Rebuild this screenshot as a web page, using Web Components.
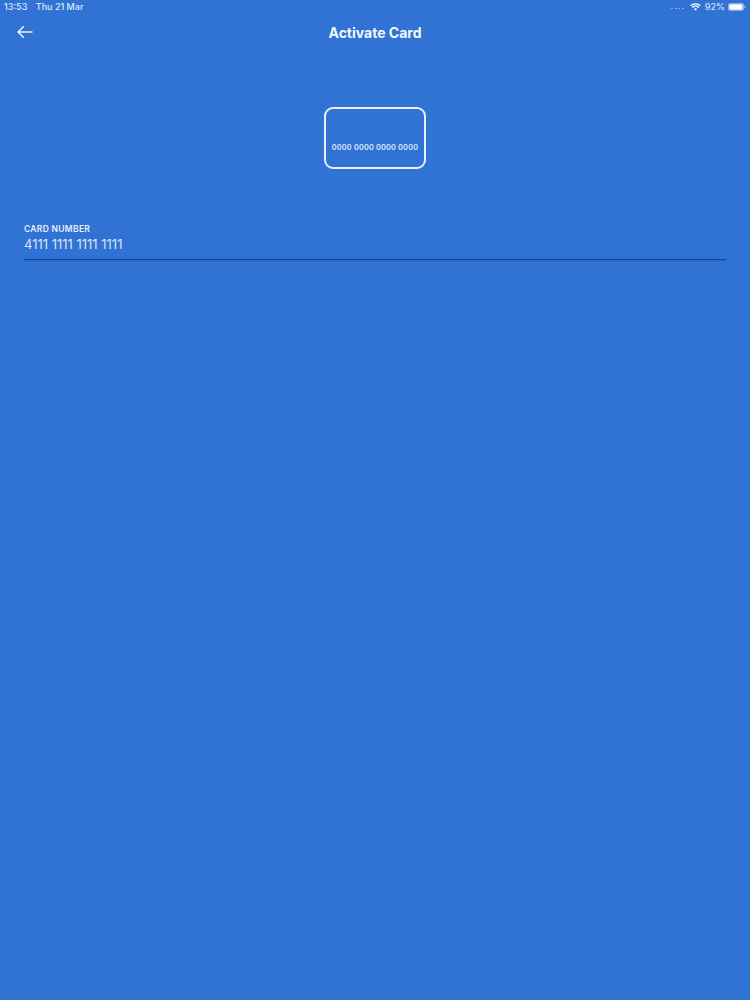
<!DOCTYPE html>
<html><head><meta charset="utf-8">
<style>
html,body{margin:0;padding:0;height:100%;background:#3073d4;}
body{font-family:Inter,"Liberation Sans",sans-serif;color:#fff;}
</style></head>
<body>
<activate-screen>
  <status-bar></status-bar>
  <nav-bar title="Activate Card"></nav-bar>
  <card-graphic number="0000 0000 0000 0000"></card-graphic>
  <text-field label="CARD NUMBER" value="4111 1111 1111 1111"></text-field>
</activate-screen>
<script>
function def(name, html, init){
  customElements.define(name, class extends HTMLElement{
    constructor(){super();this.attachShadow({mode:'open'}).innerHTML=html;}
    connectedCallback(){ if(init) init(this,this.shadowRoot); }
  });
}
def('activate-screen',`<style>:host{display:flex;flex-direction:column;width:750px;height:1000px;background:#3073d4;overflow:hidden}</style><slot></slot>`);
def('status-bar',`<style>
:host{display:flex;justify-content:space-between;align-items:center;height:13px;padding:0 4px 0 4px;font-size:9px;font-weight:500;color:#dbe8fa;line-height:13px}
.l,.r{display:flex;align-items:center}
.l span+span{margin-left:8.5px}
.dots{display:flex;gap:1.5px;margin-right:6px}
.dots i{width:2px;height:1px;background:#7fa8e4;margin-top:4px}
svg{display:block}
.pct{margin:0 3px 0 4px;color:#cfe0f7}
</style>
<div class="l"><span>13:53</span><span>Thu 21 Mar</span></div>
<div class="r"><div class="dots"><i></i><i></i><i></i><i></i></div>
<svg width="11" height="8" viewBox="0 0 11 8"><path d="M.6 2.8a7 7 0 0 1 9.8 0M2.3 4.5a4.6 4.6 0 0 1 6.4 0" fill="none" stroke="#fff" stroke-width="1.3"/><path d="M5.5 7.6 3.9 6a2.3 2.3 0 0 1 3.2 0z" fill="#fff"/></svg>
<span class="pct">92%</span>
<svg width="18" height="8" viewBox="0 0 18 8"><rect x=".4" y=".4" width="15.2" height="7.2" rx="1.8" fill="none" stroke="#c3d6f2" stroke-width=".7"/><rect x="1.2" y="1.2" width="13.4" height="5.6" rx="1" fill="#fff"/><rect x="16.3" y="2.8" width="1" height="2.4" rx=".5" fill="#a9c5ee"/></svg></div>`);
def('nav-bar',`<style>
:host{display:flex;align-items:center;justify-content:center;position:relative;height:38px;font-size:14px;font-weight:700;color:#f3f7fd}
button{position:absolute;left:17px;top:12px;padding:0;border:0;background:none;display:block;line-height:0}
span{transform:translateY(-.5px)}
</style>
<button aria-label="Back"><svg width="16" height="14" viewBox="0 0 16 14"><path d="M15.5 7H1.2M6.8 1.2 1 7l5.8 5.8" fill="none" stroke="#eef4fc" stroke-width="1.5"/></svg></button>
<span id="t"></span>`,(h,s)=>{s.getElementById('t').textContent=h.getAttribute('title')});
def('card-graphic',`<style>
:host{display:flex;justify-content:center;margin-top:56px}
.c{box-sizing:border-box;width:102px;height:62px;border:2px solid #e8f0fb;border-radius:9px;display:flex;align-items:flex-end;justify-content:center;padding-bottom:14.5px;font-size:7.3px;font-weight:600;line-height:10px;color:#dfeafa;letter-spacing:.2px;white-space:nowrap}
</style><div class="c"><span id="n"></span></div>`,(h,s)=>{s.getElementById('n').textContent=h.getAttribute('number')});
def('text-field',`<style>
:host{display:block;margin:54.5px 24px 0;height:35.5px;position:relative}
.l{font-size:8.5px;font-weight:600;line-height:10px;color:#e6effb;letter-spacing:.3px}
.v{font-size:13px;line-height:14px;margin-top:3.5px;color:#d8e6f9;font-weight:400}
.u{height:1px;margin-top:7.5px;background:#0f4690;box-shadow:0 .5px 1px rgba(15,70,144,.55)}
</style><div class="l" id="l"></div><div class="v" id="v"></div><div class="u"></div>`,(h,s)=>{s.getElementById('l').textContent=h.getAttribute('label');s.getElementById('v').textContent=h.getAttribute('value')});
</script>
</body></html>
